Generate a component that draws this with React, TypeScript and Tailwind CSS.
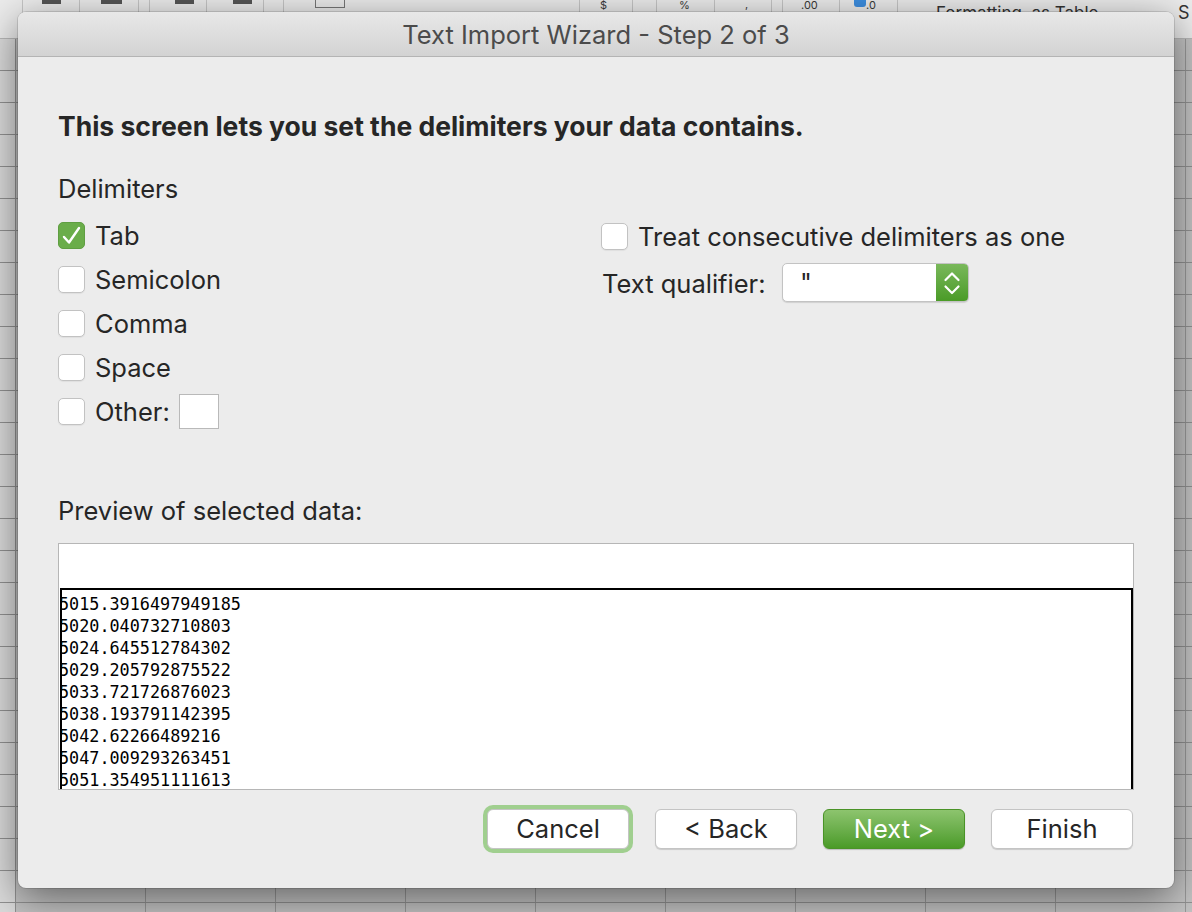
const previewLines = [
  "5015.3916497949185",
  "5020.040732710803",
  "5024.645512784302",
  "5029.205792875522",
  "5033.721726876023",
  "5038.193791142395",
  "5042.62266489216",
  "5047.009293263451",
  "5051.354951111613",
];

const delimiters = [
  { label: "Tab", checked: true },
  { label: "Semicolon", checked: false },
  { label: "Comma", checked: false },
  { label: "Space", checked: false },
];

const gridRows = Array.from({ length: 28 });
const gridCols = Array.from({ length: 10 });

function Checkbox({ checked = false }: { checked?: boolean }) {
  if (checked) {
    return (
      <div className="w-[27px] h-[27px] shrink-0 rounded-[5px] bg-[#6aad4a] border border-[#5f9e42]">
        <svg width="25" height="25" viewBox="0 0 25 25">
          <path d="M5 14 L10 19.5 L20 5" stroke="white" strokeWidth="2.4" fill="none" strokeLinecap="round" strokeLinejoin="round" />
        </svg>
      </div>
    );
  }
  return <div className="w-[27px] h-[27px] shrink-0 rounded-[5px] bg-white border border-[#c2c2c2] shadow-[0_1px_1px_rgba(0,0,0,0.06)]" />;
}

function Button({ label, kind = "normal" }: { label: string; kind?: "normal" | "focus" | "primary" }) {
  if (kind === "primary") {
    return (
      <div className="w-[142px] h-[40px] rounded-[6px] border border-[#4a9327] bg-gradient-to-b from-[#8dc46e] to-[#4a9b26] text-white text-[25.5px] flex items-center justify-center shadow-[0_1px_1px_rgba(0,0,0,0.2)]">
        {label}
      </div>
    );
  }
  return (
    <div
      className={
        "w-[142px] h-[40px] rounded-[6px] bg-white border border-[#c4c4c4] text-[#262626] text-[25.5px] flex items-center justify-center shadow-[0_1px_1px_rgba(0,0,0,0.15)] " +
        (kind === "focus" ? "ring-[4px] ring-[#a0cf8f]" : "")
      }
    >
      {label}
    </div>
  );
}

export default function App() {
  return (
    <div className="relative w-[1192px] h-[912px] overflow-hidden bg-[#c4c4c4] [font-family:Inter,'Noto_Sans',sans-serif]">
      {/* Excel ribbon behind the sheet */}
      <div className="h-[39px] bg-[#ececec] border-b border-[#b9b9b9] flex items-start text-[#3a3a3a]">
        <div className="w-[23px] h-[13px] border-r border-[#c6c6c6]" />
        <div className="w-[57px] h-[13px] border-r border-[#c6c6c6] pl-[19px]"><div className="w-[19px] h-[4px] bg-[#555]" /></div>
        <div className="w-[59px] h-[13px] border-r border-[#c6c6c6] pl-[21px]"><div className="w-[21px] h-[4px] bg-[#555]" /></div>
        <div className="w-[10px]" />
        <div className="w-[58px] h-[13px] border-x border-[#c6c6c6] pl-[25px]"><div className="w-[19px] h-[4px] bg-[#555]" /></div>
        <div className="w-[57px] h-[13px] border-r border-[#c6c6c6] pl-[26px]"><div className="w-[19px] h-[4px] bg-[#555]" /></div>
        <div className="w-[19px]" />
        <div className="w-[297px] h-[13px] border-x border-[#c6c6c6] pl-[31px]"><div className="w-[30px] h-[8px] border-x border-b border-[#777]" /></div>
        <div className="w-[53px] h-[13px] border-r border-[#c6c6c6] text-[11px] leading-[11px] pl-[20px]">$</div>
        <div className="w-[24px] h-[13px] border-r border-[#c6c6c6]" />
        <div className="w-[58px] h-[13px] border-r border-[#c6c6c6] text-[11px] leading-[11px] pl-[22px]">%</div>
        <div className="w-[57px] h-[13px] border-r border-[#c6c6c6] text-[11px] leading-[8px] pl-[30px]">,</div>
        <div className="w-[10px]" />
        <div className="w-[58px] h-[13px] border-x border-[#c6c6c6] text-[11px] leading-[11px] pl-[18px]">.00</div>
        <div className="w-[58px] h-[13px] border-r border-[#c6c6c6] text-[11px] leading-[11px] pl-[14px] flex items-start">
          <span className="w-[12px] h-[7px] bg-[#3d8ee0] rounded-b-[3px]" />
          <span>.0</span>
        </div>
        <div className="w-[38px]" />
        <div className="w-[240px] text-[17px] leading-[26px] text-[#333] whitespace-nowrap">Formatting&nbsp;&nbsp;as Table</div>
        <div className="text-[18px] leading-[26px] text-[#333] pl-[2px]">S</div>
      </div>

      {/* Sheet grid */}
      <div className="flex flex-col">
        {gridRows.map((_, r) => (
          <div key={r} className="flex h-[32px] shrink-0 border-b border-[#929292]">
            <div className="w-[16px] shrink-0 bg-[#dcdcdc] border-r border-[#929292]" />
            {gridCols.map((_, c) => (
              <div key={c} className="w-[130px] shrink-0 border-r border-[#999999]" />
            ))}
          </div>
        ))}
      </div>

      {/* Dialog */}
      <div className="absolute left-[18px] top-[12px] w-[1156px] h-[876px] rounded-[8px] bg-[#ececec] shadow-[0_10px_40px_rgba(0,0,0,0.5),0_0_0_1px_rgba(0,0,0,0.12)] overflow-hidden flex flex-col">
        <div className="h-[45px] shrink-0 pt-[2px] bg-gradient-to-b from-[#e8e8e8] to-[#d3d3d3] border-b border-[#b4b4b4] flex items-center justify-center text-[25.5px] text-[#4b4b4b]">
          Text Import Wizard - Step 2 of 3
        </div>

        <div className="flex flex-col pl-[40px] pr-[40px] text-[#262626]">
          <div className="mt-[55px] text-[26.5px] leading-[28px] font-bold">
            This screen lets you set the delimiters your data contains.
          </div>
          <div className="mt-[35px] text-[25.5px] leading-[28px]">Delimiters</div>

          <div className="mt-[10px] flex">
            <div className="w-[543px] flex flex-col">
              {delimiters.map((d) => (
                <div key={d.label} className="h-[44px] flex items-center gap-[10px] text-[25.5px]">
                  <Checkbox checked={d.checked} />
                  <span className="pt-[2px]">{d.label}</span>
                </div>
              ))}
              <div className="h-[44px] flex items-center text-[25.5px]">
                <Checkbox />
                <span className="ml-[10px] pt-[2px]">Other:</span>
                <div className="ml-[9px] w-[40px] h-[35px] bg-white border border-[#b9b9b9]" />
              </div>
            </div>

            <div className="flex flex-col">
              <div className="mt-[1px] h-[44px] flex items-center gap-[10px] text-[25.5px]">
                <Checkbox />
                <span className="pt-[2px]">Treat consecutive delimiters as one</span>
              </div>
              <div className="h-[48px] flex items-center text-[25.5px]">
                <span className="w-[181px] pl-[1px] pt-[5px]">Text qualifier:</span>
                <div className="w-[187px] h-[39px] flex rounded-[5px] bg-white border border-[#c3c3c3] shadow-[0_1px_1px_rgba(0,0,0,0.12)] overflow-hidden">
                  <div className="flex-1 pl-[17px] leading-[37px]">"</div>
                  <div className="w-[32px] bg-gradient-to-b from-[#79b85a] to-[#4a9b26] flex items-center justify-center">
                    <svg width="32" height="39" viewBox="0 0 32 39">
                      <path d="M9.5 17 L16 10.5 L22.5 17" stroke="white" strokeWidth="2.2" fill="none" strokeLinecap="round" strokeLinejoin="round" />
                      <path d="M9.5 23.5 L16 30 L22.5 23.5" stroke="white" strokeWidth="2.2" fill="none" strokeLinecap="round" strokeLinejoin="round" />
                    </svg>
                  </div>
                </div>
              </div>
            </div>
          </div>

          <div className="mt-[64px] text-[25.5px] leading-[28px]">Preview of selected data:</div>

          <div className="mt-[18px] w-[1076px] h-[247px] bg-white border border-[#b6b6b6] flex flex-col overflow-hidden">
            <div className="h-[44px] shrink-0" />
            <div className="ml-[1px] flex-1 border-2 border-b-0 border-black overflow-hidden pt-[3px] [font-family:'DejaVu_Sans_Mono',monospace] text-[16.8px] leading-[22px] text-black">
              {previewLines.map((line) => (
                <div key={line} className="-ml-[3px] whitespace-nowrap">{line}</div>
              ))}
            </div>
          </div>

          <div className="mt-[19px] flex justify-end gap-[26px] pr-[1px]">
            <Button label="Cancel" kind="focus" />
            <Button label="< Back" />
            <Button label="Next >" kind="primary" />
            <Button label="Finish" />
          </div>
        </div>
      </div>
    </div>
  );
}
